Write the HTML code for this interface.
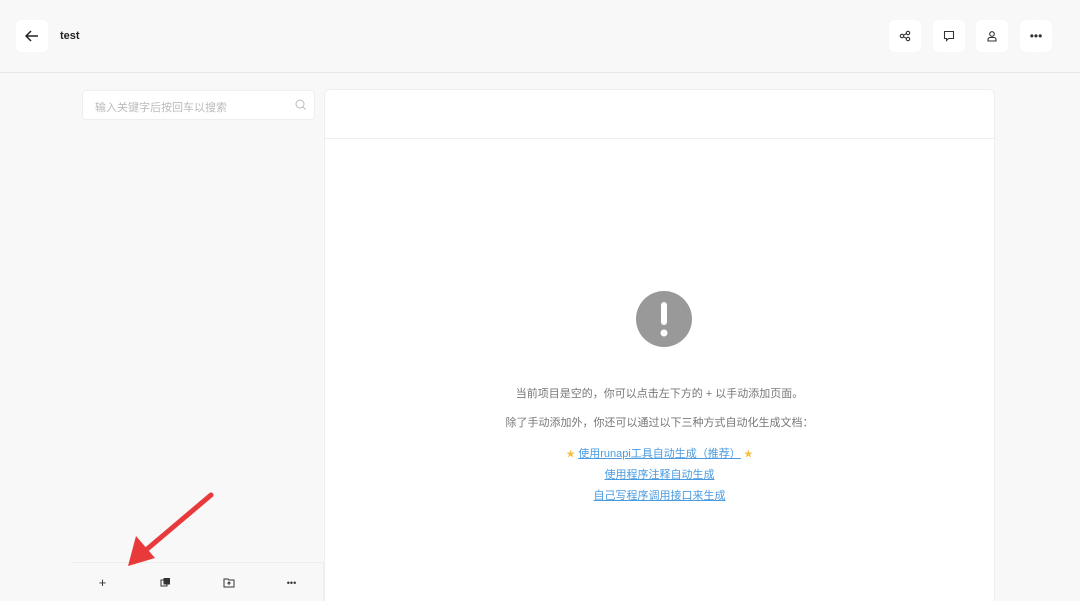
<!DOCTYPE html>
<html style="overflow:hidden;height:601px"><head><meta charset="utf-8"><style>
body{margin:0;width:1080px;height:601px;background:#f8f8f8;font-family:"Liberation Sans","Noto Sans CJK SC",sans-serif;position:relative;overflow:hidden}
.hdr{position:absolute;left:0;top:0;width:1080px;height:72px;border-bottom:1px solid #e8e8e8;background:#f8f8f8}
.btn{position:absolute;top:20px;width:32px;height:32px;background:#fff;border-radius:6px;display:flex;align-items:center;justify-content:center}
.title{position:absolute;left:60px;top:30px;font-size:11px;font-weight:bold;color:#222}
.search{position:absolute;left:82px;top:90px;width:233px;height:30px;background:#fff;border:1px solid #eee;border-radius:4px;box-sizing:border-box;font-size:11px;color:#bbb;padding:8px 12px}
.main{position:absolute;left:324px;top:89px;width:671px;height:512px;background:#fff;border:1px solid #eee;border-bottom:none;border-radius:6px 6px 0 0;box-sizing:border-box}
.main .line{position:absolute;left:0;right:0;top:48px;border-top:1px solid #eee}
.t{position:absolute;left:0;width:100%;text-align:center;font-size:11px;color:#777}
.l{color:#4a9be0;text-decoration:underline}
.s{color:#f5c040;font-size:9px}
.tb{position:absolute;top:562px;height:39px;width:63px;border-right:1px solid #eee;border-top:1px solid #eee;display:flex;align-items:center;justify-content:center;background:#f8f8f8;font-size:13px;color:#333}
</style></head><body>
<div class="hdr"></div>
<div class="btn" style="left:16px"><svg width="14" height="14" viewBox="0 0 14 14"><path d="M13 7H1M6 2L1 7l5 5" stroke="#222" stroke-width="1.5" fill="none"/></svg></div>
<div class="title">test</div>
<div class="btn" style="left:889px"><svg width="12" height="12" viewBox="0 0 12 12" fill="none" stroke="#333" stroke-width="1.1"><circle cx="3" cy="6" r="1.7"/><circle cx="9" cy="3" r="1.7"/><circle cx="9" cy="9" r="1.7"/><path d="M4.5 5.2L7.5 3.6M4.5 6.8L7.5 8.4"/></svg></div>
<div class="btn" style="left:933px"><svg width="12" height="12" viewBox="0 0 12 12" fill="none" stroke="#333" stroke-width="1.1"><path d="M1.5 1.5h9v7h-5l-2 2v-2h-2z"/></svg></div>
<div class="btn" style="left:976px"><svg width="12" height="12" viewBox="0 0 12 12" fill="none" stroke="#333" stroke-width="1.1"><circle cx="6" cy="4" r="2.3"/><path d="M2 11V9.5a2 2 0 0 1 2-2h4a2 2 0 0 1 2 2V11z"/></svg></div>
<div class="btn" style="left:1020px;font-size:12px;color:#333">•••</div>
<div class="search">输入关键字后按回车以搜索<svg style="position:absolute;right:8px;top:8px" width="11" height="11" viewBox="0 0 11 11" fill="none" stroke="#bbb" stroke-width="1"><circle cx="5" cy="5" r="4"/><path d="M8 8l2.5 2.5"/></svg></div>
<div class="main"><div class="line"></div>
<svg style="position:absolute;left:311px;top:201px" width="56" height="56" viewBox="0 0 56 56"><circle cx="28" cy="28" r="28" fill="#999"/><rect x="25" y="11" width="6" height="23" rx="3" fill="#fff"/><circle cx="28" cy="42" r="3.5" fill="#fff"/></svg>
<div class="t" style="top:295px">当前项目是空的，你可以点击左下方的 + 以手动添加页面。</div>
<div class="t" style="top:324px">除了手动添加外，你还可以通过以下三种方式自动化生成文档：</div>
<div class="t" style="top:355px"><span class="s">★</span> <span class="l">使用runapi工具自动生成（推荐）</span> <span class="s">★</span></div>
<div class="t" style="top:376px"><span class="l">使用程序注释自动生成</span></div>
<div class="t" style="top:397px"><span class="l">自己写程序调用接口来生成</span></div>
</div>
<div class="tb" style="left:71px">+</div>
<div class="tb" style="left:134px"><svg width="11" height="11" viewBox="0 0 11 11"><rect x="1" y="3" width="6" height="6" fill="none" stroke="#333"/><rect x="3.5" y="1" width="6.5" height="6.5" fill="#333"/></svg></div>
<div class="tb" style="left:197px"><svg width="12" height="11" viewBox="0 0 12 11" fill="none" stroke="#333"><path d="M1 2h4l1 1h5v7H1z"/><path d="M6 8V5M4.5 6.5L6 5l1.5 1.5"/></svg></div>
<div class="tb" style="left:260px;font-size:9px">•••</div>
<svg style="position:absolute;left:0;top:0" width="1080" height="601"><line x1="211" y1="495" x2="146" y2="550" stroke="#e83a3a" stroke-width="5" stroke-linecap="round"/><polygon points="128,566 136,536 155,558" fill="#e83a3a"/></svg>
</body></html>
